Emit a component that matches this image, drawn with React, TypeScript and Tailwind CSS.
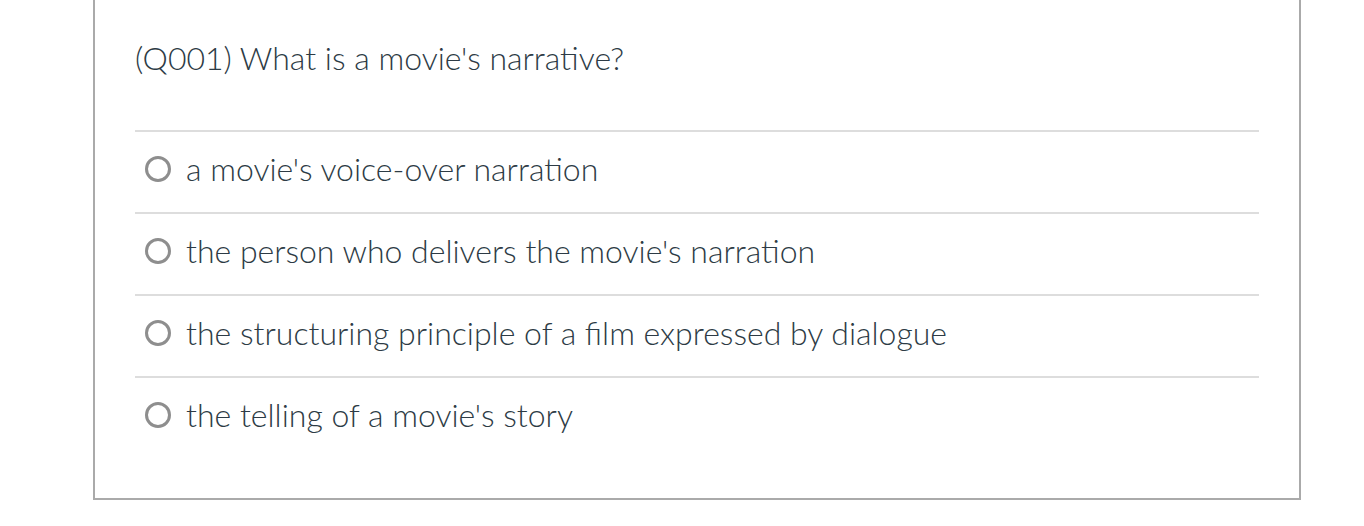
const answers = [
  "a movie's voice-over narration",
  "the person who delivers the movie's narration",
  "the structuring principle of a film expressed by dialogue",
  "the telling of a movie's story",
];

export default function App() {
  return (
    <div className="min-h-screen bg-white font-['Lato','Noto_Sans',sans-serif] text-[#2d3b45]">
      <div className="ml-[93px] w-[1208px] border-2 border-t-0 border-[#aaaaaa] px-[40px] pb-[40px]">
        <div className="h-[130px] pt-[36px] text-[32px] leading-[44px] font-light">
          (Q001) What is a movie's narrative?
        </div>
        {answers.map((a) => (
          <div
            key={a}
            className="flex h-[82px] items-center gap-[15px] border-t-2 border-[#dddddd] pb-[6px] pl-[10px]"
          >
            <span className="h-[26px] w-[26px] shrink-0 rounded-full border-[3px] border-[#8e8e8e]" />
            <span className="text-[32px] leading-[40px] font-light">{a}</span>
          </div>
        ))}
      </div>
    </div>
  );
}
